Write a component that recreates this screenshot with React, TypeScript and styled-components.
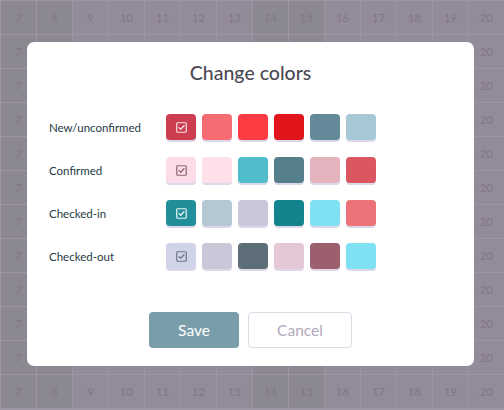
import styled, { createGlobalStyle } from "styled-components";

const GlobalStyle = createGlobalStyle`
  html, body {
    margin: 0;
    padding: 0;
    width: 504px;
    height: 410px;
    overflow: hidden;
    font-family: "Lato", "Open Sans", sans-serif;
  }
`;

const Page = styled.div`
  position: relative;
  width: 504px;
  height: 410px;
  overflow: hidden;
`;

const Calendar = styled.div`
  display: grid;
  grid-template-columns: repeat(14, 1fr);
  grid-auto-rows: 33px;
  gap: 1px;
  padding: 1px 0 1px 1px;
  background: #9d95a3;
  height: 410px;
  box-sizing: border-box;
`;

const Cell = styled.div<{ $weekend: boolean }>`
  display: flex;
  align-items: center;
  justify-content: center;
  background: ${(p) => (p.$weekend ? "#8b8891" : "#938a9a")};
  color: #7f7886;
  font-size: 11px;
`;

const Backdrop = styled.div`
  position: absolute;
  inset: 0;
  display: flex;
  align-items: center;
  justify-content: center;
`;

const Modal = styled.div`
  width: 447px;
  height: 324px;
  margin-left: -3px;
  margin-top: -2px;
  background: white;
  border-radius: 7px;
  box-sizing: border-box;
  padding: 19px 22px 18px;
  display: flex;
  flex-direction: column;
`;

const Title = styled.h2`
  margin: 0;
  text-align: center;
  font-size: 19.5px;
  font-weight: 500;
  color: #4b4a55;
`;

const Rows = styled.div`
  display: flex;
  flex-direction: column;
  gap: 17px;
  margin-top: 30px;
`;

const Row = styled.div`
  display: flex;
  align-items: center;
`;

const Label = styled.div`
  width: 117px;
  font-size: 11.5px;
  color: #1e3a45;
`;

const Swatches = styled.div`
  display: flex;
  gap: 6px;
`;

const Swatch = styled.div<{ $color: string }>`
  width: 30px;
  height: 26px;
  border-radius: 4px;
  background: ${(p) => p.$color};
  box-shadow: 0 2px 0 #dcd8ea;
  display: flex;
  align-items: center;
  justify-content: center;
`;

const Buttons = styled.div`
  margin-top: auto;
  display: flex;
  justify-content: center;
  gap: 9px;
`;

const SaveButton = styled.button`
  width: 90px;
  height: 36px;
  border: none;
  border-radius: 4px;
  background: #799ea9;
  color: white;
  font-family: inherit;
  font-size: 15.5px;
`;

const CancelButton = styled.button`
  width: 104px;
  height: 36px;
  border: 1px solid #dedbe8;
  border-radius: 4px;
  background: white;
  color: #b1a9bc;
  font-family: inherit;
  font-size: 15.5px;
`;

function CheckIcon({ color }: { color: string }) {
  return (
    <svg width="11" height="11" viewBox="0 0 11 11">
      <rect x="0.75" y="0.75" width="9.5" height="9.5" rx="1" fill="none" stroke={color} strokeWidth="1.2" />
      <path d="M3 5.6 L4.7 7.2 L8 3.8" fill="none" stroke={color} strokeWidth="1.3" strokeLinecap="round" strokeLinejoin="round" />
    </svg>
  );
}

interface IStatus {
  name: string;
  colors: string[];
  check: string;
}

const statuses: IStatus[] = [
  {
    name: "New/unconfirmed",
    colors: ["#cc3d4f", "#f56c72", "#fb3d43", "#e0151c", "#648a9a", "#a7c9d5"],
    check: "rgba(255,255,255,0.85)",
  },
  {
    name: "Confirmed",
    colors: ["#fcdce8", "#fde0e8", "#4fbdca", "#557f8b", "#e4b3be", "#db565f"],
    check: "#8d6775",
  },
  {
    name: "Checked-in",
    colors: ["#218f99", "#b4c7d2", "#c9c8db", "#13848e", "#80e1f2", "#ec7479"],
    check: "rgba(255,255,255,0.9)",
  },
  {
    name: "Checked-out",
    colors: ["#d1d4e8", "#c9c8d9", "#5e6e78", "#e4c8d6", "#9b5f6e", "#80e1f2"],
    check: "#6a7a86",
  },
];

const days = [7, 8, 9, 10, 11, 12, 13, 14, 15, 16, 17, 18, 19, 20];
const weekend = [7, 8, 14, 15];

function App() {
  return (
    <Page>
      <GlobalStyle />
      <Calendar>
        {Array.from({ length: 12 }).map((_, r) =>
          days.map((d) => (
            <Cell key={`${r}-${d}`} $weekend={weekend.includes(d)}>
              {d}
            </Cell>
          ))
        )}
      </Calendar>
      <Backdrop>
        <Modal>
          <Title>Change colors</Title>
          <Rows>
            {statuses.map((s) => (
              <Row key={s.name}>
                <Label>{s.name}</Label>
                <Swatches>
                  {s.colors.map((c, i) => (
                    <Swatch key={i} $color={c}>
                      {i === 0 && <CheckIcon color={s.check} />}
                    </Swatch>
                  ))}
                </Swatches>
              </Row>
            ))}
          </Rows>
          <Buttons>
            <SaveButton>Save</SaveButton>
            <CancelButton>Cancel</CancelButton>
          </Buttons>
        </Modal>
      </Backdrop>
    </Page>
  );
}

export default App;
